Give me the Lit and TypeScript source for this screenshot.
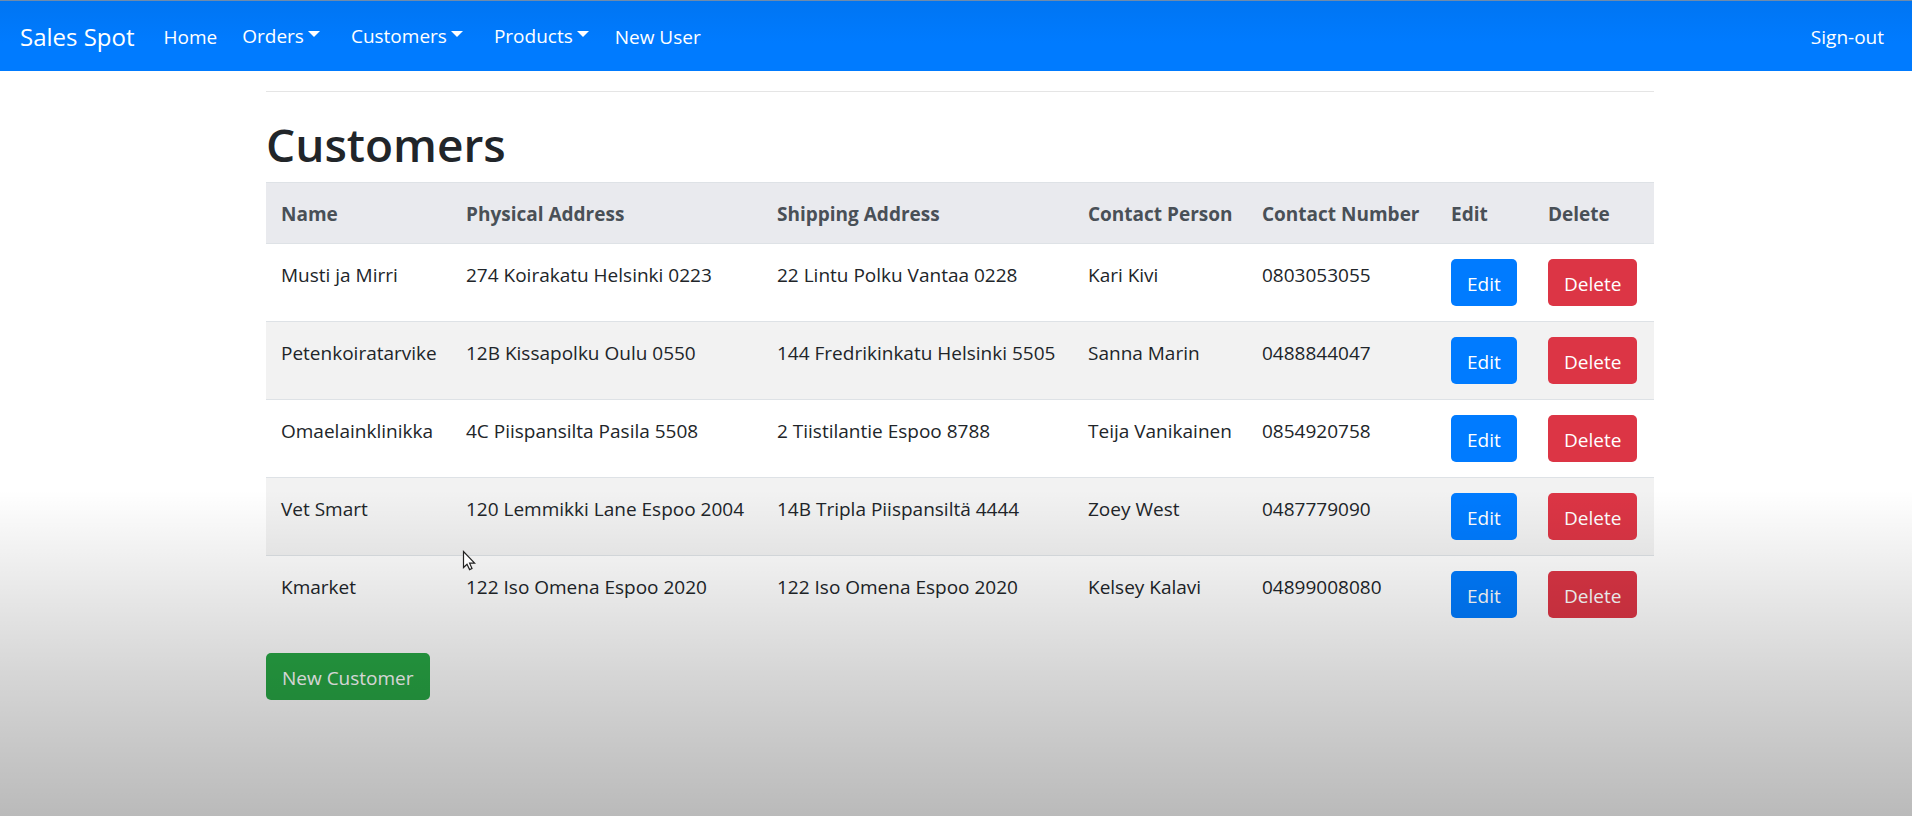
import { LitElement, html, css } from "lit";
import { customElement } from "lit/decorators.js";

interface Customer {
  name: string;
  physical: string;
  shipping: string;
  person: string;
  phone: string;
}

const CUSTOMERS: Customer[] = [
  { name: "Musti ja Mirri", physical: "274 Koirakatu Helsinki 0223", shipping: "22 Lintu Polku Vantaa 0228", person: "Kari Kivi", phone: "0803053055" },
  { name: "Petenkoiratarvike", physical: "12B Kissapolku Oulu 0550", shipping: "144 Fredrikinkatu Helsinki 5505", person: "Sanna Marin", phone: "0488844047" },
  { name: "Omaelainklinikka", physical: "4C Piispansilta Pasila 5508", shipping: "2 Tiistilantie Espoo 8788", person: "Teija Vanikainen", phone: "0854920758" },
  { name: "Vet Smart", physical: "120 Lemmikki Lane Espoo 2004", shipping: "14B Tripla Piispansiltä 4444", person: "Zoey West", phone: "0487779090" },
  { name: "Kmarket", physical: "122 Iso Omena Espoo 2020", shipping: "122 Iso Omena Espoo 2020", person: "Kelsey Kalavi", phone: "04899008080" },
];

@customElement("nav-bar")
class NavBar extends LitElement {
  static styles = css`
    :host { display: block; }
    .bar {
      display: flex;
      align-items: center;
      box-sizing: border-box;
      height: 71px;
      padding: 2px 18px 0 20px;
      border-top: 1px solid #6f8bab;
      background: linear-gradient(#0075f2, #007bff 60%);
      color: #fff;
      font-size: 19px;
      line-height: 30px;
    }
    .brand { font-size: 24px; margin-right: 19px; }
    a, button { color: inherit; text-decoration: none; font: inherit; }
    .brand { font-size: 24px; }
    .links { display: flex; align-items: center; flex: 1; }
    .link { padding: 10px; }
    .toggle {
      display: flex;
      align-items: center;
      gap: 4px;
      margin: 0 6px 0 5px;
      padding: 9px 10px 11px;
      border: 0;
      background: none;
      cursor: pointer;
    }
    .caret {
      border: 6px solid transparent;
      border-top-color: #fff;
      border-bottom: 0;
      margin-bottom: 4px;
    }
  `;
  private menu(label: string) {
    return html`<button class="toggle" type="button" aria-haspopup="true">${label}<span class="caret"></span></button>`;
  }
  render() {
    return html`
      <nav class="bar">
        <a class="brand" href="#">Sales Spot</a>
        <div class="links">
          <a class="link" href="#">Home</a>
          ${["Orders", "Customers", "Products"].map((l) => this.menu(l))}
          <a class="link" href="#">New User</a>
        </div>
        <a class="link" href="#">Sign-out</a>
      </nav>
    `;
  }
}

@customElement("app-root")
class AppRoot extends LitElement {
  static styles = css`
    :host {
      display: block;
      position: relative;
      min-height: 100vh;
      background: #fff;
      color: #212529;
      font: 19px/30px "Open Sans", "Noto Sans", sans-serif;
    }
    .container {
      box-sizing: border-box;
      max-width: 1418px;
      margin: 0 auto;
      padding: 0 11px 0 19px;
    }
    .rule { margin: 20px 0; border: 0; border-top: 1px solid #e5e5e5; }
    .title { margin: 0; padding: 2px 0 8px; font-size: 46px; line-height: 60px; font-weight: 600; }
    .table { width: 100%; table-layout: fixed; border-collapse: collapse; margin-bottom: 20px; }
    .c-name { width: 185px; }
    .c-addr { width: 311px; }
    .c-person { width: 174px; }
    .c-phone { width: 189px; }
    .c-edit { width: 97px; }
    .c-delete { width: 121px; }
    th, td { padding: 16px 15px 14px; border-top: 1px solid #dee2e6; text-align: left; vertical-align: top; white-space: nowrap; }
    th { background: #e9eaee; color: #495057; font-weight: 700; }
    .action { padding: 15px; }
    tbody tr:nth-child(even) { background: #f2f2f2; }
    .btn {
      display: block;
      height: 47px;
      padding: 2px 16px 0;
      border: 0;
      border-radius: 5px;
      color: #fff;
      font: inherit;
      cursor: pointer;
    }
    .primary { background: #007bff; }
    .danger { background: #dc3545; }
    .success { background: #28a745; }
    .shade {
      position: absolute;
      inset: auto 0 0;
      height: 326px;
      pointer-events: none;
      background: linear-gradient(transparent, rgba(0, 0, 0, 0.06) 20%, rgba(0, 0, 0, 0.16) 56%, rgba(0, 0, 0, 0.27));
    }
    .cursor { position: absolute; left: 462px; top: 550px; width: 14px; height: 21px; pointer-events: none; }
  `;
  render() {
    return html`
      <nav-bar></nav-bar>
      <main class="container">
        <hr class="rule" />
        <h1 class="title">Customers</h1>
        <table class="table">
          <colgroup>
            <col class="c-name" /><col class="c-addr" /><col class="c-addr" /><col class="c-person" />
            <col class="c-phone" /><col class="c-edit" /><col class="c-delete" />
          </colgroup>
          <thead>
            <tr>
              <th>Name</th><th>Physical Address</th><th>Shipping Address</th><th>Contact Person</th>
              <th>Contact Number</th><th>Edit</th><th>Delete</th>
            </tr>
          </thead>
          <tbody>
            ${CUSTOMERS.map((c) => html`
              <tr>
                <td>${c.name}</td><td>${c.physical}</td><td>${c.shipping}</td><td>${c.person}</td><td>${c.phone}</td>
                <td class="action"><button class="btn primary" type="button">Edit</button></td>
                <td class="action"><button class="btn danger" type="button">Delete</button></td>
              </tr>`)}
          </tbody>
        </table>
        <button class="btn success" type="button">New Customer</button>
      </main>
      <div class="shade"></div>
      <svg class="cursor" viewBox="0 0 14 21" aria-hidden="true">
        <path d="M1.5 1.5V17.5L5 14.2L7.6 19.6L10 18.5L7.6 13.2H12.6Z" fill="#fff" stroke="#222" stroke-width="1.2" />
      </svg>
    `;
  }
}
